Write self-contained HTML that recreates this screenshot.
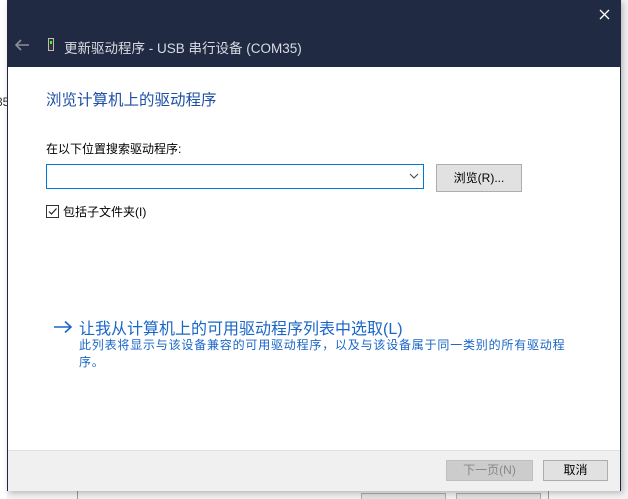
<!DOCTYPE html>
<html style="overflow:hidden;width:628px;height:499px"><head><meta charset="utf-8"><style>
body{margin:0;width:628px;height:499px;overflow:hidden;background:#f3f3f3;position:relative;font-family:"Liberation Sans","Noto Sans CJK SC",sans-serif;}
.a{position:absolute}
</style></head><body>
<div class="a" style="left:0;top:0;width:7px;height:499px;background:#fff"></div>
<div class="a" style="left:-4px;top:95px;font-size:12px;color:#333">35</div>
<div class="a" style="left:77px;top:486px;width:472px;height:13px;background:#f0f0f0;border-left:1px solid #999;border-right:1px solid #999;box-sizing:border-box"></div>
<div class="a" style="left:361px;top:493px;width:85px;height:6px;background:#e1e1e1;border:1px solid #adadad;border-bottom:none;box-sizing:border-box"></div>
<div class="a" style="left:456px;top:493px;width:85px;height:6px;background:#e1e1e1;border:1px solid #adadad;border-bottom:none;box-sizing:border-box"></div>
<div class="a" style="left:7px;top:0;width:614px;height:491px;background:#fff;border:1px solid #1f2a42;border-top:none;box-sizing:border-box;box-shadow:2px 2px 6px rgba(0,0,0,.25)"></div>
<div class="a" style="left:7px;top:0;width:614px;height:67px;background:#202b43"></div>
<svg class="a" style="left:599px;top:9px" width="11" height="11"><path d="M1 1l9 9M10 1l-9 9" stroke="#fff" stroke-width="1.3"/></svg>
<svg class="a" style="left:14px;top:38px" width="16" height="14"><path d="M15 7H2M7 2L2 7l5 5" stroke="#8a8f9a" stroke-width="1.6" fill="none"/></svg>
<div class="a" style="left:48px;top:38px;width:6px;height:13px;border:1px solid #bbb;background:#333;box-sizing:border-box"></div>
<div class="a" style="left:50px;top:41px;width:2px;height:3px;background:#3f3"></div>
<div class="a" style="left:64px;top:37px;color:#d8dbe2;font-size:13.5px">更新驱动程序 - USB 串行设备 (COM35)</div>
<div class="a" style="left:46px;top:88px;color:#1d4fa5;font-size:15.5px">浏览计算机上的驱动程序</div>
<div class="a" style="left:46px;top:140px;color:#000;font-size:12px">在以下位置搜索驱动程序:</div>
<div class="a" style="left:46px;top:164px;width:378px;height:25px;border:1px solid #0078d7;box-sizing:border-box"></div>
<svg class="a" style="left:409px;top:173px" width="10" height="6"><path d="M1 1l4 4 4-4" stroke="#444" fill="none"/></svg>
<div class="a" style="left:436px;top:164px;width:86px;height:28px;background:#e1e1e1;border:1px solid #adadad;box-sizing:border-box;font-size:12px;text-align:center;line-height:26px">浏览(R)...</div>
<div class="a" style="left:46px;top:205px;width:13px;height:13px;border:1px solid #333;box-sizing:border-box"></div>
<svg class="a" style="left:47px;top:206px" width="11" height="11"><path d="M2 5.5l2.5 2.5L9.5 2.5" stroke="#222" stroke-width="1.2" fill="none"/></svg>
<div class="a" style="left:63px;top:203px;font-size:12px">包括子文件夹(I)</div>
<svg class="a" style="left:53px;top:320px" width="20" height="14"><path d="M1 7h17M12 1.5L18 7l-6 5.5" stroke="#1a66c7" stroke-width="1.6" fill="none"/></svg>
<div class="a" style="left:79px;top:315px;color:#1a66c7;font-size:16px">让我从计算机上的可用驱动程序列表中选取(L)</div>
<div class="a" style="left:79px;top:337px;width:492px;color:#1a66c7;font-size:12px;letter-spacing:0.8px;line-height:17px">此列表将显示与该设备兼容的可用驱动程序，以及与该设备属于同一类别的所有驱动程序。</div>
<div class="a" style="left:8px;top:450px;width:612px;height:40px;background:#f0f0f0;border-top:1px solid #dfdfdf"></div>
<div class="a" style="left:446px;top:460px;width:87px;height:21px;background:#ccc;border:1px solid #bfbfbf;box-sizing:border-box;font-size:12px;color:#888;text-align:center;line-height:19px">下一页(N)</div>
<div class="a" style="left:543px;top:460px;width:65px;height:21px;background:#e1e1e1;border:1px solid #adadad;box-sizing:border-box;font-size:12px;text-align:center;line-height:19px">取消</div>
</body></html>
